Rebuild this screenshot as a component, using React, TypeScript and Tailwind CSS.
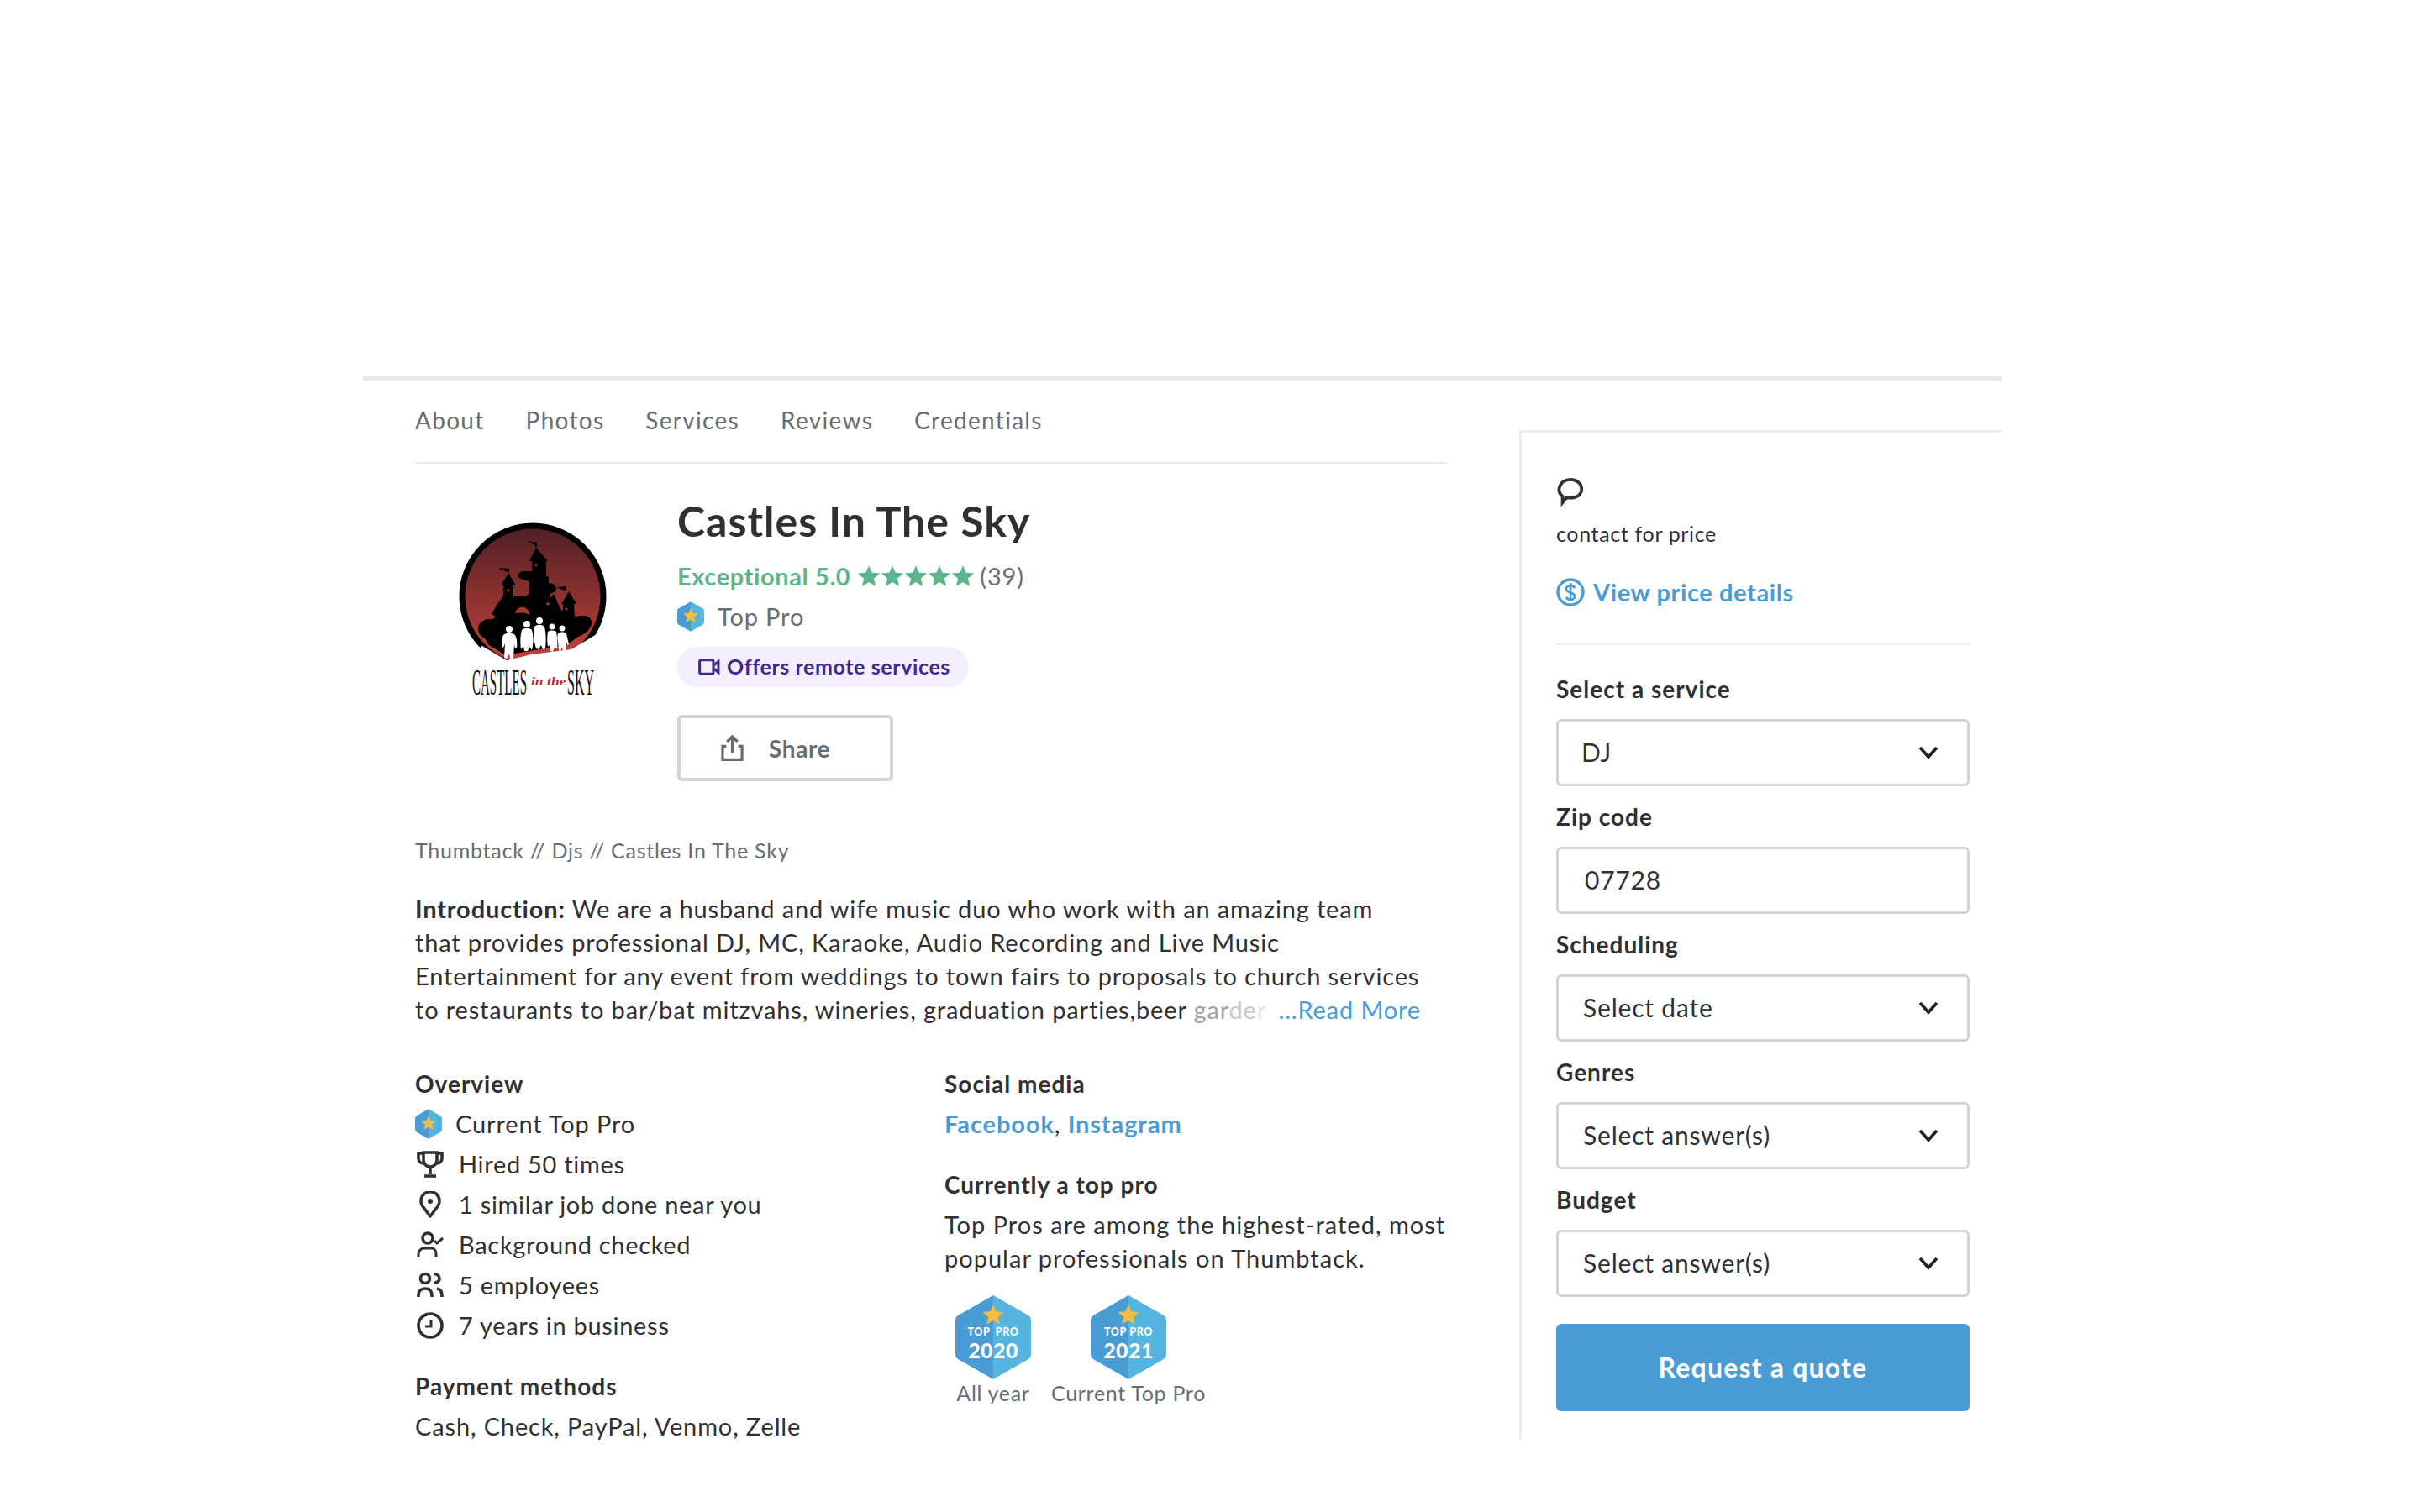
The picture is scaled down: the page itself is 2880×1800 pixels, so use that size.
import type { ReactNode } from "react";

const overviewRows = [
  { icon: "trophy", text: "Hired 50 times" },
  { icon: "pin", text: "1 similar job done near you" },
  { icon: "user", text: "Background checked" },
  { icon: "users", text: "5 employees" },
  { icon: "clock", text: "7 years in business" },
];

const navItems = ["About", "Photos", "Services", "Reviews", "Credentials"];

function Star({ className }: { className?: string }) {
  return (
    <svg viewBox="0 0 24 24" className={className} fill="currentColor">
      <path d="M12 1l3.2 7.4 8 .7-6.1 5.2 1.9 7.9L12 18l-7 4.2 1.9-7.9L.8 9.1l8-.7z" />
    </svg>
  );
}

function HexBadge({ className }: { className?: string }) {
  return (
    <svg viewBox="0 0 36 40" className={className}>
      <path d="M18 0L2 9a4 4 0 0 0-2 3v16a4 4 0 0 0 2 3l16 9z" fill="#4a9cd4" />
      <path d="M18 0l16 9a4 4 0 0 1 2 3v16a4 4 0 0 1-2 3l-16 9z" fill="#54b5e0" />
      <path d="M18 9l2.9 6.6 7.1.6-5.4 4.7 1.7 7-6.3-3.8-6.3 3.8 1.7-7-5.4-4.7 7.1-.6z" fill="#f5bd41" />
    </svg>
  );
}

function YearBadge({ year, spaced }: { year: string; spaced?: boolean }) {
  return (
    <svg viewBox="0 0 90 100" className="h-[100px] w-[90px]">
      <path d="M45 0L3 24a6 6 0 0 0-3 5v42a6 6 0 0 0 3 5l42 24z" fill="#4a9cd4" />
      <path d="M45 0l42 24a6 6 0 0 1 3 5v42a6 6 0 0 1-3 5l-42 24z" fill="#54b5e0" />
      <path d="M45 11l3.6 8.2 8.9.8-6.7 5.9 2 8.7-7.8-4.6-7.8 4.6 2-8.7-6.7-5.9 8.9-.8z" fill="#f5bd41" />
      <text x="45" y="48" textAnchor="middle" fill="#fff" fontSize="12.5" fontWeight="900" fontFamily="Lato, sans-serif" letterSpacing="0.6" wordSpacing={spaced ? 3 : 0}>
        TOP PRO
      </text>
      <text x="45" y="75" textAnchor="middle" fill="#fff" fontSize="25" fontWeight="900" fontFamily="Lato, sans-serif" letterSpacing="0.4">
        {year}
      </text>
    </svg>
  );
}

function RowIcon({ name }: { name: string }) {
  const base = {
    viewBox: "0 0 32 32",
    fill: "none",
    stroke: "#2f3033",
    strokeWidth: 3.6,
    className: "h-[32px] w-[32px] shrink-0",
  };
  if (name === "trophy") {
    return (
      <svg {...base}>
        <path d="M8 2h16v9a8 8 0 0 1-16 0zM8 3H2v6c0 4 3 6 6 6M24 3h6v6c0 4-3 6-6 6M16 19v9M9 30h14" />
      </svg>
    );
  }
  if (name === "pin") {
    return (
      <svg {...base}>
        <path d="M16 30L7 18a11 11 0 1 1 18 0z" strokeLinejoin="round" />
        <circle cx="16" cy="12" r="3" fill="#2f3033" stroke="none" />
      </svg>
    );
  }
  if (name === "user") {
    return (
      <svg {...base}>
        <circle cx="13" cy="8" r="6" />
        <path d="M2 31v-4c0-4 3-7 7-7h9c3 0 5 3 5 7v4M21 11l3 3 7-6" strokeWidth="3" />
      </svg>
    );
  }
  if (name === "users") {
    return (
      <svg {...base}>
        <circle cx="10" cy="8" r="5.5" />
        <path d="M20 2.5c5 0 7 3 7 5.5s-2 5-7 5.5M2 30v-2c0-5 3-8 8-8s8 3 8 8v2M24 20c4 1 6 4 6 8v2" />
      </svg>
    );
  }
  return (
    <svg {...base}>
      <circle cx="16" cy="16" r="14" />
      <path d="M17 9v8h-7" strokeWidth="3" />
    </svg>
  );
}

function Chevron() {
  return (
    <svg viewBox="0 0 24 16" className="h-[16px] w-[24px]" fill="none" stroke="#1f2023" strokeWidth="3.6">
      <path d="M2 2l10 11L22 2" />
    </svg>
  );
}

function Field({ label, value, select = true, pad = "pl-[29px]" }: { label: string; value: string; select?: boolean; pad?: string }) {
  return (
    <div>
      <div className="h-[40px] text-[28px] font-bold leading-[40px] tracking-[1px] text-[#2f3033]">{label}</div>
      <div className={`mt-[16px] mb-[16px] flex h-[80px] items-center justify-between rounded-[6px] border-[3px] border-[#d3d4d5] pr-[34px] text-[30px] tracking-[0.8px] text-[#2f3033] ${pad}`}>
        <span>{value}</span>
        {select && <Chevron />}
      </div>
    </div>
  );
}

function Heading({ children }: { children: ReactNode }) {
  return <div className="text-[28px] font-bold leading-[40px] tracking-[1px] text-[#2f3033]">{children}</div>;
}

function Logo() {
  return (
    <svg viewBox="0 0 240 240" className="h-[240px] w-[240px]">
      <defs>
        <linearGradient id="sky" x1="0" y1="0" x2="0" y2="1">
          <stop offset="0" stopColor="#4f1f25" />
          <stop offset="1" stopColor="#c8433a" />
        </linearGradient>
      </defs>
      <circle cx="124" cy="110" r="84" fill="url(#sky)" stroke="#000" strokeWidth="7" />
      {/* ground cuts the bottom of the ring */}
      <path d="M62 168L93 186l30-7 47-6 40-24v60H62z" fill="#fff" />
      {/* castle */}
      <path d="M128 52l-8 16h3v12h-9c-8 0-10 7-4 9l10 3v14l-4 4h-14l-1 1v-14h3l-9-15-9 15h3v12l-7 10-7 12 5 3-3 3h-5c-8 0-14 7-13 13 1 5 4 8 8 10l5 8 20 12 22-4 50-8 14-10c8-3 16-9 16-17 0-6-6-9-13-8l-7 1-1-15h3l-9-15-9 15h2v8l-3-2-8-18-5 6v-6c5-1 9-4 8-8-1-3-5-5-9-5v-7l-3-1V68h2z" fill="#000" />
      <path d="M129 52V46l-12-2 8 4zM96 82v-5l-13-1 8 4zM164 103v-5l-11 1 6 3z" fill="#000" />
      <path d="M103 130c1-6 8-9 13-6 3 2 4 5 5 8-5-3-12-3-18-2z" fill="#a8352f" />
      <circle cx="95" cy="103" r="1.8" fill="#8a2f2d" />
      <circle cx="128" cy="73" r="1.8" fill="#6b2527" />
      <circle cx="142" cy="119" r="1.8" fill="#a8352f" />
      <circle cx="164" cy="125" r="1.6" fill="#a8352f" />
      {/* figures */}
      <g fill="#fff">
        <circle cx="96" cy="149" r="4" />
        <path d="M89 156c3-3 11-3 14 0 2 4 3 10 2 15l-2 1-1-5-1 17h-4l-1-6-3 6-3-1 1-17-2 5-2-1c0-5 0-10 2-14z" />
        <circle cx="117" cy="143" r="4" />
        <path d="M111 150c3-3 9-3 12 0 2 7 2 16 0 24l-3-4-2 5h-4l-1-6-3 4c-1-8-1-16 1-23z" />
        <circle cx="132" cy="139" r="4" />
        <path d="M126 146c3-3 9-3 12 0 2 8 2 18 1 26l-3 1-2-5-3 5-3-1-2-8c-1-6-1-12 0-18z" />
        <circle cx="147" cy="146" r="3.5" />
        <path d="M142 152c2-2 8-2 10 0 1 7 2 14 1 20l-3-2-2 6-3-1-1-7-2 2c-1-6-1-12 0-18z" />
        <circle cx="159" cy="148" r="3.5" />
        <path d="M154 154c2-2 8-2 10 0l3 13-2 1-1-4-1 11h-3l-1-5-2 5-2-1-1-10c-1-4-1-7 0-10z" />
      </g>
      <g fontFamily="'Liberation Serif', serif" letterSpacing="0">
        <text transform="translate(52 227) scale(0.341 1)" fontSize="44" fill="#111">
          CASTLES
        </text>
        <text transform="translate(122 216) scale(1.17 1)" fontStyle="italic" fontWeight="700" fontSize="15" fill="#b3302c">
          in the
        </text>
        <text transform="translate(165 227) scale(0.364 1)" fontSize="44" fill="#111">
          SKY
        </text>
      </g>
    </svg>
  );
}

export default function App() {
  return (
    <div className="h-[1800px] w-full overflow-hidden bg-white font-['Lato',sans-serif] tracking-[0.85px] text-[#2f3033]">
      <div className="h-[448px]" />
      <div className="ml-[432px] flex h-[1265px] w-[1950px] border-t-[5px] border-[#e8e8e8]">
        {/* left column */}
        <div className="w-[1290px] pl-[62px]">
          <div className="flex h-[99px] items-center gap-[49px] border-b-2 border-[#e9eced] pb-[4px] text-[28px] tracking-[1.3px] text-[#676d73]">
            {navItems.map((item) => (
              <span key={item}>{item}</span>
            ))}
          </div>

          <div className="flex h-[380px] pt-[38px]">
            <div className="w-[312px] pl-[16px] pt-[10px]">
              <Logo />
            </div>
            <div>
              <h1 className="text-[50px] font-bold leading-[60px] tracking-[1px] text-[#2f3033]">Castles In The Sky</h1>
              <div className="mt-[16px] flex h-[40px] items-center text-[29px]">
                <span className="font-bold tracking-[0.6px] text-[#5cb58a]">Exceptional 5.0</span>
                <span className="ml-[8px] flex text-[#5cb58a]">
                  {[0, 1, 2, 3, 4].map((i) => (
                    <Star key={i} className="h-[28px] w-[28px]" />
                  ))}
                </span>
                <span className="ml-[6px] text-[#676d73]">(39)</span>
              </div>
              <div className="mt-[8px] flex h-[40px] items-center text-[29px] text-[#676d73]">
                <HexBadge className="h-[36px] w-[32px]" />
                <span className="ml-[16px]">Top Pro</span>
              </div>
              <div className="mt-[16px] flex h-[48px] w-[347px] items-center rounded-full bg-[#f3efff] pl-[25px] text-[25px] font-bold tracking-[0.6px] text-[#3f2a87]">
                <svg viewBox="0 0 28 22" className="h-[20px] w-[26px]" fill="none" stroke="#3f2a87" strokeWidth="3.4">
                  <rect x="1.5" y="2" width="18" height="18" rx="2" />
                  <path d="M20 9l6-5v14l-6-5" />
                </svg>
                <span className="ml-[8px]">Offers remote services</span>
              </div>
              <div className="mt-[33px] flex h-[79px] w-[257px] items-center rounded-[6px] border-4 border-[#d3d4d5] pl-[47px] text-[28px] font-bold tracking-[0.6px] text-[#676d73]">
                <svg viewBox="0 0 32 36" className="h-[32px] w-[29px]" fill="none" stroke="#676d73" strokeWidth="3.6">
                  <path d="M16 24V3M9 9l7-7 7 7M8 15H3v18h26V15h-5" />
                </svg>
                <span className="ml-[29px]">Share</span>
              </div>
            </div>
          </div>

          <div className="mt-[62px] text-[25px] leading-[36px] tracking-[0.75px] text-[#676d73]">Thumbtack // Djs // Castles In The Sky</div>

          <p className="mt-[32px] text-[29px] leading-[40px] text-[#2f3033]">
            <b>Introduction:</b> We are a husband and wife music duo who work with an amazing team
            <br />
            that provides professional DJ, MC, Karaoke, Audio Recording and Live Music
            <br />
            Entertainment for any event from weddings to town fairs to proposals to church services
            <br />
            to restaurants to bar/bat mitzvahs, wineries, graduation parties,beer
            <span className="text-[#9fa1a4]"> gar</span>
            <span className="text-[#c8cacb]">de</span>
            <span className="text-[#e4e5e6]">r</span>
            <span className="ml-[6px] text-[#4a9cd4]"> ...Read More</span>
          </p>

          <div className="mt-[48px] flex">
            <div className="w-[630px]">
              <Heading>Overview</Heading>
              <div className="mt-[8px] flex h-[40px] items-center text-[29px]">
                <HexBadge className="h-[36px] w-[32px]" />
                <span className="ml-[16px]">Current Top Pro</span>
              </div>
              {overviewRows.map((row) => (
                <div key={row.text} className="mt-[8px] flex h-[40px] items-center pl-[2px] text-[29px] tracking-[0.7px]">
                  <RowIcon name={row.icon} />
                  <span className="ml-[18px]">{row.text}</span>
                </div>
              ))}
              <div className="mt-[32px]">
                <Heading>Payment methods</Heading>
              </div>
              <div className="mt-[8px] text-[29px] leading-[40px]">Cash, Check, PayPal, Venmo, Zelle</div>
            </div>
            <div className="flex-1">
              <Heading>Social media</Heading>
              <div className="mt-[8px] text-[29px] font-bold leading-[40px] tracking-[0.9px] text-[#4a9cd4]">
                Facebook<span className="font-normal text-[#2f3033]">, </span>Instagram
              </div>
              <div className="mt-[32px]">
                <Heading>Currently a top pro</Heading>
              </div>
              <p className="mt-[8px] text-[29px] leading-[40px] tracking-[1px]">
                Top Pros are among the highest-rated, most
                <br />
                popular professionals on Thumbtack.
              </p>
              <div className="mt-[24px] flex text-center text-[25px] leading-[32px] tracking-[0.7px] text-[#676d73]">
                <div className="ml-[13px] flex w-[90px] flex-col items-center">
                  <YearBadge year="2020" spaced />
                  <span className="whitespace-nowrap">All year</span>
                </div>
                <div className="ml-[71px] flex w-[90px] flex-col items-center">
                  <YearBadge year="2021" />
                  <span className="whitespace-nowrap">Current Top Pro</span>
                </div>
              </div>
            </div>
          </div>
        </div>

        {/* right column */}
        <div className="ml-[86px] mt-[59px] w-[574px] border-l-[3px] border-t-[3px] border-[#ececec] pl-[41px] pr-[38px]">
          <svg viewBox="0 0 32 36" className="mt-[54px] h-[34px] w-[34px]" fill="none" stroke="#2f3033" strokeWidth="4">
            <path d="M6 31v-8C2 20 1 16 2 12 4 5 10 2 16 2c8 0 14 5 14 12S24 25 16 25c-2 0-4 0-5 0z" />
          </svg>
          <div className="mt-[16px] text-[25px] leading-[32px] tracking-[0.65px]">contact for price</div>
          <div className="mt-[32px] flex items-center text-[29px] font-bold tracking-[0.6px] text-[#4a9cd4]">
            <svg viewBox="0 0 34 34" className="h-[34px] w-[34px]" fill="none" stroke="#4a9cd4" strokeWidth="3.4">
              <circle cx="17" cy="17" r="15" />
              <path d="M22 12c-1-2-3-3-5-3-3 0-5 2-5 4 0 6 10 3 10 9 0 2-2 4-5 4-2 0-4-1-5-3M17 6v22" strokeWidth="2.8" />
            </svg>
            <span className="ml-[10px]">View price details</span>
          </div>
          <div className="mt-[39px] mb-[32px] h-[2px] bg-[#eeeeee]" />
          <Field label="Select a service" value="DJ" pad="pl-[27px]" />
          <Field label="Zip code" value="07728" select={false} pad="pl-[31px]" />
          <Field label="Scheduling" value="Select date" />
          <Field label="Genres" value="Select answer(s)" />
          <Field label="Budget" value="Select answer(s)" />
          <div className="mt-[32px] flex h-[104px] items-center justify-center rounded-[6px] bg-[#4a9cd4] text-[32px] font-bold tracking-[1.2px] text-white">
            Request a quote
          </div>
        </div>
      </div>
    </div>
  );
}
